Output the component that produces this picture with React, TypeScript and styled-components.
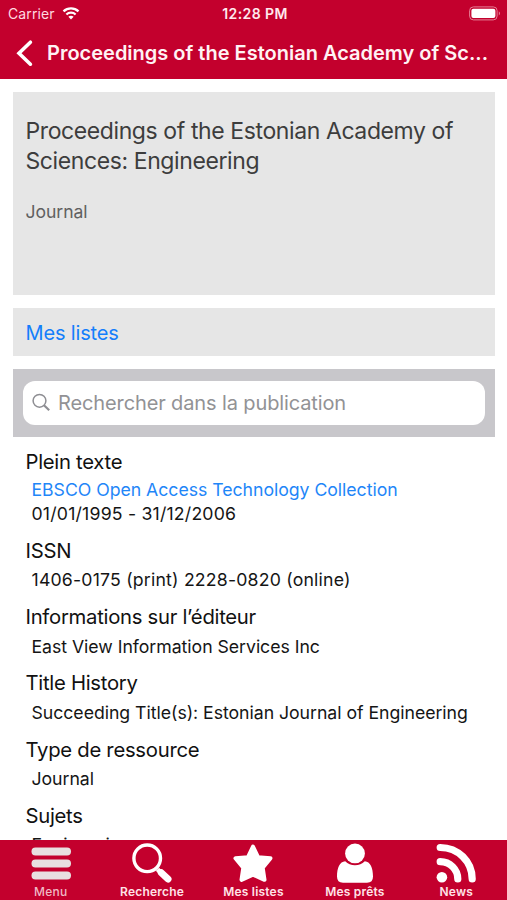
import React from "react";
import styled, { createGlobalStyle } from "styled-components";

const GlobalStyle = createGlobalStyle`
  * { box-sizing: border-box; }
  body { margin: 0; background: #fff; font-family: Inter, "Liberation Sans", sans-serif; }
  h1, h2, p { margin: 0; font-weight: 400; }
`;

const Screen = styled.div`
  width: 507px;
  height: 900px;
  display: flex;
  flex-direction: column;
  overflow: hidden;
  background: #fff;
`;

const Header = styled.header`
  flex: none;
  height: 79px;
  background: #c3002d;
  color: #fff;
`;

const StatusBar = styled.div`
  height: 27px;
  padding: 0 6px 0 8px;
  display: grid;
  grid-template-columns: 1fr auto 1fr;
  align-items: center;
  font-size: 14px;
  line-height: 27px;
`;

const Carrier = styled.div`
  display: flex;
  align-items: center;
  gap: 7px;
  color: #ffd9e0;
  letter-spacing: 0.1px;
`;

const Clock = styled.div`
  font-weight: 600;
  font-size: 14px;
  letter-spacing: 0.4px;
  color: #ffe9ed;
  padding-left: 1px;
`;

const Battery = styled.svg`
  justify-self: end;
`;

const NavBar = styled.div`
  height: 52px;
  padding: 0 16px;
  display: flex;
  align-items: center;
  gap: 14px;
`;

const NavTitle = styled.h1`
  font-size: 20px;
  font-weight: 600;
  line-height: 50px;
  letter-spacing: 0;
  white-space: nowrap;
  color: #fff2f4;
`;

const Content = styled.main`
  flex: 1;
  min-height: 0;
  overflow: hidden;
  padding: 12.5px 12px 0 13px;
  display: flex;
  flex-direction: column;
`;

const Card = styled.section<{ $height: number }>`
  flex: none;
  height: ${(p) => p.$height}px;
  margin-bottom: 12.5px;
  padding: 0 12.5px;
  background: #e6e6e6;
`;

const PublicationTitle = styled.h2`
  padding-top: 24px;
  font-size: 23px;
  line-height: 30.5px;
  letter-spacing: -0.4px;
  white-space: nowrap;
  color: #3d3d3d;
`;

const PublicationType = styled.p`
  margin-top: 23px;
  font-size: 17.6px;
  line-height: 24px;
  letter-spacing: -0.05px;
  color: #606060;
`;

const ListLink = styled.a`
  font-size: 20px;
  line-height: 50.5px;
  letter-spacing: -0.15px;
  color: #147efb;
`;

const SearchPanel = styled.div`
  flex: none;
  height: 68.5px;
  padding: 12px 10px;
  background: #c8c7cb;
`;

const SearchField = styled.div`
  height: 44px;
  padding: 0 9px;
  display: flex;
  align-items: center;
  gap: 7px;
  border-radius: 12px;
  background: #fff;
  color: #929295;
  font-size: 20px;
  line-height: 42px;
  letter-spacing: -0.12px;
`;

const Details = styled.div`
  padding: 12px 12.5px 0;
`;

const Group = styled.section<{ $tight?: boolean }>`
  display: flex;
  flex-direction: column;
  gap: ${(p) => (p.$tight ? 3 : 4.5)}px;
  margin-bottom: ${(p) => (p.$tight ? 11.2 : 11.5)}px;
`;

const GroupTitle = styled.h2`
  font-size: 20.3px;
  line-height: 26px;
  letter-spacing: -0.28px;
  color: #111;
`;

const Values = styled.div`
  padding-left: 6px;
  font-size: 17.7px;
  line-height: 24.3px;
  white-space: nowrap;
`;

const Value = styled.p<{ $link?: boolean }>`
  letter-spacing: -0.04px;
  color: ${(p) => (p.$link ? "#1f86f8" : "#151515")};
`;

const NumericValue = styled(Value)`
  letter-spacing: 0.19px;
`;

const TabBar = styled.nav`
  flex: none;
  height: 60px;
  display: grid;
  grid-template-columns: repeat(5, 1fr);
  background: #c3002d;
`;

const Tab = styled.div<{ $active?: boolean }>`
  display: flex;
  flex-direction: column;
  align-items: center;
  padding-top: 3px;
  color: ${(p) => (p.$active ? "#e8dfe0" : "#fff")};
`;

const TabLabel = styled.span<{ $active?: boolean }>`
  margin-top: 1px;
  font-size: 12px;
  font-weight: ${(p) => (p.$active ? 500 : 600)};
  line-height: 16px;
  letter-spacing: 0.2px;
  color: ${(p) => (p.$active ? "#f0b9c4" : "#ffe3e8")};
`;

const TabIcon = styled.svg`
  width: 42px;
  height: 40px;
`;

const icons = {
  menu: (
    <g fill="currentColor">
      <rect x="1.5" y="4.5" width="39.5" height="8" rx="4" />
      <rect x="1.5" y="16.5" width="39.5" height="8" rx="4" />
      <rect x="1.5" y="28.5" width="39.5" height="8" rx="4" />
    </g>
  ),
  search: (
    <g fill="none" stroke="currentColor">
      <circle cx="16.2" cy="15.3" r="13.3" strokeWidth="3.4" />
      <path d="M26.5 26.2 29 29" strokeWidth="4.5" />
      <path d="M30.3 29.8 37 36" strokeWidth="7" strokeLinecap="round" />
    </g>
  ),
  star: (
    <path
      d="M21 3.6 26 14.2 38.5 15.2 30.7 24.8 32.5 36.8 21 31.7 9.5 36.8 11.3 24.8 3.5 15.2 16 14.2Z"
      fill="currentColor"
      stroke="currentColor"
      strokeWidth="4"
      strokeLinejoin="round"
    />
  ),
  person: (
    <g fill="currentColor">
      <circle cx="21" cy="10.4" r="9.9" />
      <path d="M11.2 18.3Q15.2 22.3 21 22.3T30.8 18.3C36.3 18.7 39 25 39 33.5Q39 39.7 33 39.7H9Q3 39.7 3 33.5C3 25 5.7 18.7 11.2 18.3Z" />
    </g>
  ),
  feed: (
    <g fill="none" stroke="currentColor" strokeWidth="7.2" strokeLinecap="round">
      <path d="M5.2 4.5C23 4.5 37.2 18.5 37.2 36" />
      <path d="M5.2 18.7C15 18.7 22.8 26.5 22.8 36" />
      <circle cx="6.9" cy="34.2" r="5.3" fill="currentColor" stroke="none" />
    </g>
  ),
};

const tabs: { icon: keyof typeof icons; label: string; active?: boolean }[] = [
  { icon: "menu", label: "Menu", active: true },
  { icon: "search", label: "Recherche" },
  { icon: "star", label: "Mes listes" },
  { icon: "person", label: "Mes prêts" },
  { icon: "feed", label: "News" },
];

const groups: { title: string; link?: string; value: string; numeric?: boolean }[] = [
  { title: "Plein texte", link: "EBSCO Open Access Technology Collection", value: "01/01/1995 - 31/12/2006", numeric: true },
  { title: "ISSN", value: "1406-0175 (print) 2228-0820 (online)", numeric: true },
  { title: "Informations sur l’éditeur", value: "East View Information Services Inc" },
  { title: "Title History", value: "Succeeding Title(s): Estonian Journal of Engineering" },
  { title: "Type de ressource", value: "Journal" },
  { title: "Sujets", value: "Engineering" },
];

export default function App() {
  return (
    <>
      <GlobalStyle />
      <Screen>
        <Header>
          <StatusBar>
            <Carrier>
              Carrier
              <svg width="18" height="13" viewBox="0 0 17 13" fill="none" stroke="#fff" strokeWidth="2.3">
                <path d="M1 4.4C5.2.4 11.8.4 16 4.4" />
                <path d="M3.9 7.5c2.6-2.4 6.6-2.4 9.2 0" />
                <path d="M8.5 12.5 5.9 9.8c1.5-1.3 3.7-1.3 5.2 0Z" fill="#fff" stroke="none" />
              </svg>
            </Carrier>
            <Clock>12:28 PM</Clock>
            <Battery width="32" height="15" viewBox="0 0 32 15">
              <rect x="0.6" y="0.9" width="27.5" height="13" rx="3.8" fill="none" stroke="#e57f96" />
              <rect x="2.4" y="2.7" width="24" height="9.4" rx="2" fill="#fff" />
              <path d="M29.8 5.3c1.6.8 1.6 3.4 0 4.2Z" fill="#e57f96" />
            </Battery>
          </StatusBar>
          <NavBar>
            <svg width="17" height="28" viewBox="0 0 17 28" fill="none" stroke="#fff" strokeWidth="3.6">
              <path d="M14.4 3.2 3 14.2l11.4 11" strokeLinecap="round" strokeLinejoin="miter" />
            </svg>
            <NavTitle>Proceedings of the Estonian Academy of Sc...</NavTitle>
          </NavBar>
        </Header>
        <Content>
          <Card $height={203.5}>
            <PublicationTitle>
              Proceedings of the Estonian Academy of
              <br />
              Sciences: Engineering
            </PublicationTitle>
            <PublicationType>Journal</PublicationType>
          </Card>
          <Card $height={48.5}>
            <ListLink>Mes listes</ListLink>
          </Card>
          <SearchPanel>
            <SearchField>
              <svg width="19" height="19" viewBox="0 0 19 19" fill="none" stroke="#8e8e93">
                <circle cx="7.5" cy="7.8" r="6.4" strokeWidth="1.5" />
                <path d="m12 12.3 5.2 5" strokeWidth="2.2" />
              </svg>
              Rechercher dans la publication
            </SearchField>
          </SearchPanel>
          <Details>
            {groups.map((g) => (
              <Group key={g.title} $tight={!!g.link}>
                <GroupTitle>{g.title}</GroupTitle>
                <Values>
                  {g.link && <Value $link>{g.link}</Value>}
                  {g.numeric ? <NumericValue>{g.value}</NumericValue> : <Value>{g.value}</Value>}
                </Values>
              </Group>
            ))}
          </Details>
        </Content>
        <TabBar>
          {tabs.map((t) => (
            <Tab key={t.label} $active={t.active}>
              <TabIcon viewBox="0 0 42 40">{icons[t.icon]}</TabIcon>
              <TabLabel $active={t.active}>{t.label}</TabLabel>
            </Tab>
          ))}
        </TabBar>
      </Screen>
    </>
  );
}
